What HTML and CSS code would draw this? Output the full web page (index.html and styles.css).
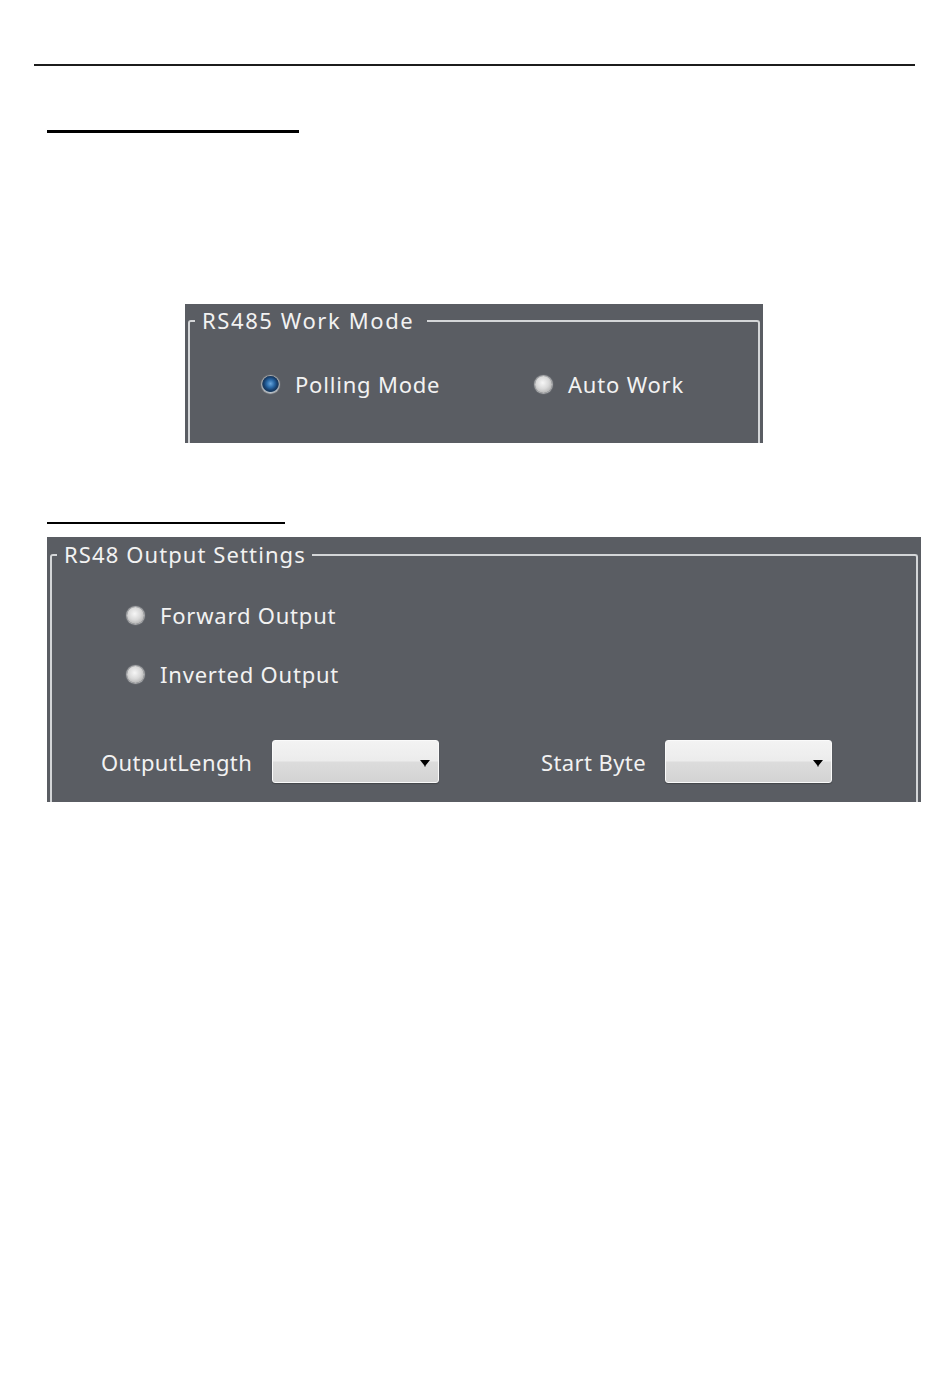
FILE: index.html
```html
<!DOCTYPE html>
<html>
<head>
<meta charset="utf-8">
<link rel="stylesheet" href="styles.css">
</head>
<body>
<div class="page">
  <div class="rule-top"></div>
  <div class="mark mark-first"></div>

  <div class="panel panel-mode">
    <fieldset class="group">
      <legend class="legend legend-mode">RS485 Work Mode</legend>
      <div class="radio-row">
        <label class="radio-item item-polling"><span class="radio checked"></span><span class="radio-text">Polling Mode</span></label>
        <label class="radio-item"><span class="radio"></span><span class="radio-text">Auto Work</span></label>
      </div>
    </fieldset>
  </div>

  <div class="mark mark-second"></div>

  <div class="panel panel-output">
    <fieldset class="group">
      <legend class="legend legend-output">RS48 Output Settings</legend>
      <div class="radio-stack">
        <label class="radio-item"><span class="radio"></span><span class="radio-text">Forward Output</span></label>
        <label class="radio-item"><span class="radio"></span><span class="radio-text">Inverted Output</span></label>
      </div>
      <div class="combo-row">
        <span class="field-label label-length">OutputLength</span>
        <div class="combo"><span class="combo-arrow"><svg width="10" height="8" viewBox="0 0 10 8"><path d="M0 1 L10 1 L5.6 6.5 L5.6 7.5 L4.4 7.5 L4.4 6.5 Z" fill="#000"/></svg></span></div>
        <span class="field-label label-start">Start Byte</span>
        <div class="combo"><span class="combo-arrow"><svg width="10" height="8" viewBox="0 0 10 8"><path d="M0 1 L10 1 L5.6 6.5 L5.6 7.5 L4.4 7.5 L4.4 6.5 Z" fill="#000"/></svg></span></div>
      </div>
    </fieldset>
  </div>
</div>
</body>
</html>
```

FILE: styles.css
```css
html, body {
  margin: 0;
  padding: 0;
  background: #ffffff;
}

.page {
  padding-top: 64px;
  font-family: "Noto Sans", "Open Sans", sans-serif;
}

.rule-top {
  height: 2px;
  margin: 0 35px 0 34px;
  background: #1c1c1c;
}

.mark {
  background: #000;
  margin-left: 47px;
}

.mark-first {
  width: 252px;
  height: 3px;
  margin-top: 64px;
}

.mark-second {
  width: 238px;
  height: 2px;
  margin-top: 79px;
}

.panel {
  background: #5a5d63;
  display: flex;
  flex-direction: column;
  box-sizing: border-box;
}

.panel-mode {
  width: 578px;
  height: 139px;
  margin: 171px 0 0 185px;
  padding-top: 3px;
}

.panel-output {
  width: 874px;
  height: 265px;
  margin: 13px 0 0 47px;
  padding-top: 4px;
}

.group {
  flex: 1;
  margin: 0 3px;
  padding: 0;
  border: 2px solid #d4d6d8;
  border-bottom: none;
  border-radius: 3px 3px 0 0;
  min-width: 0;
}

.legend {
  color: #f2f2f2;
  font-size: 22px;
  line-height: 28px;
  letter-spacing: 1.6px;
  margin-left: 5px;
  padding: 0 13px 0 7px;
  white-space: nowrap;
  position: relative;
  top: -1px;
}

.legend-output {
  letter-spacing: 1.1px;
  padding-right: 6px;
}

.radio-item {
  display: flex;
  align-items: center;
  height: 28px;
  color: #f2f2f2;
  font-size: 22px;
  letter-spacing: 0.8px;
}

.radio {
  width: 17px;
  height: 17px;
  border-radius: 50%;
  box-sizing: border-box;
  background: radial-gradient(circle at 45% 40%, #f6f6f6 0%, #d8d8d8 45%, #b4b4b4 75%, #e8e8e8 100%);
  box-shadow: 0 0 1px 1px rgba(235, 235, 235, 0.6);
  flex: none;
}

.radio.checked {
  background: radial-gradient(circle at 50% 45%, #6aa6dc 0%, #2a6aa8 30%, #173f6e 52%, #1a3a5c 62%, #e6eef4 72%, #f4f4f4 100%);
}

.radio-text {
  margin-left: 16px;
}

.radio-row {
  display: flex;
  margin-top: 35px;
  padding-left: 72px;
}

.item-polling {
  width: 273px;
}

.radio-stack {
  display: flex;
  flex-direction: column;
  gap: 31px;
  margin-top: 32px;
  padding-left: 75px;
}

.combo-row {
  display: flex;
  align-items: center;
  margin-top: 52px;
  padding-left: 49px;
}

.field-label {
  color: #f2f2f2;
  font-size: 22px;
  line-height: 28px;
  letter-spacing: 0.4px;
  white-space: nowrap;
}

.label-length {
  width: 171px;
}

.label-start {
  width: 124px;
  margin-left: 102px;
}

.combo {
  width: 167px;
  height: 43px;
  box-sizing: border-box;
  border: 1px solid #fafafa;
  border-radius: 3px;
  background: linear-gradient(#f3f3f3 0%, #ececec 48%, #dcdcdc 52%, #d3d3d3 100%);
  box-shadow: 0 1px 1px rgba(0, 0, 0, 0.25);
  display: flex;
  align-items: center;
  justify-content: flex-end;
  padding-right: 8px;
}

.combo-arrow {
  display: flex;
  margin-top: 2px;
}
```
